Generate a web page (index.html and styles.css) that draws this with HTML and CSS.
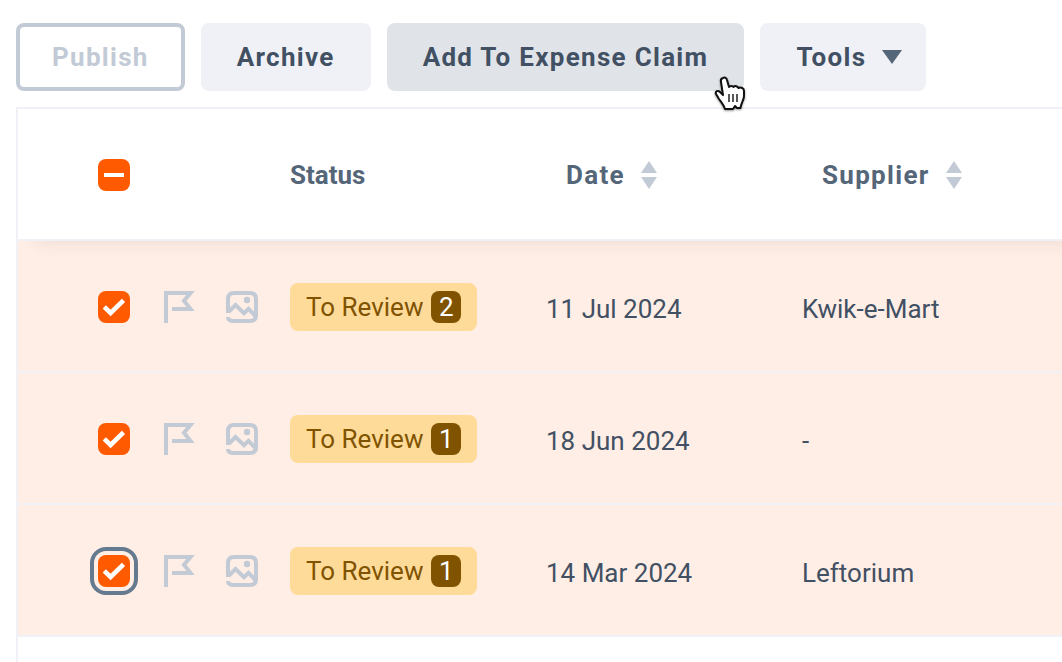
FILE: index.html
```html
<!DOCTYPE html>
<html lang="en">
<head>
<meta charset="utf-8">
<title>Costs inbox</title>
<link rel="stylesheet" href="styles.css">
</head>
<body>
<svg class="sprite" aria-hidden="true">
  <symbol id="flag" viewBox="0 0 32 32">
    <path d="M2 32V2H26.500L20 9.800L26.500 18H8" fill="none" stroke="currentColor" stroke-width="4"/>
  </symbol>
  <symbol id="image" viewBox="0 0 32 32">
    <path d="M2 22V8Q2 2 8 2H24Q30 2 30 8V24Q30 30 24 30H8Q2 30 2 26" fill="none" stroke="currentColor" stroke-width="4"/>
    <path d="M0 20H3.500L9.500 14L18 22.200L22.500 17.800L30 25.500" fill="none" stroke="currentColor" stroke-width="4"/>
    <circle cx="21" cy="9" r="3.200" fill="currentColor"/>
  </symbol>
  <symbol id="sort" viewBox="0 0 16 28">
    <path d="M8 0L16 12H0ZM0 16H16L8 28Z" fill="currentColor"/>
  </symbol>
</svg>
<main class="page">
  <div class="toolbar">
    <button class="btn btn-outline" type="button" disabled>Publish</button>
    <button class="btn" type="button">Archive</button>
    <button class="btn btn-active" type="button">Add To Expense Claim
      <svg class="pointer" viewBox="0 0 32 36" aria-hidden="true">
        <path d="M9 2C11 1 12.500 2 13 4L15 11C16 9.500 18.500 9.500 19.500 11C21 9.500 23.500 10 24.500 12C27 11 30 12 30 15V20C30 24 27 27 26.500 32H23L21 30L19 33H11C10 29 7 26 5 23L2 18C1 15 4 14 6 16L9 19L7 6C6.500 4 7 2.500 9 2Z" fill="#fff" stroke="#111" stroke-width="2" stroke-linejoin="round"/>
        <path d="M15 18V26M19 18V26M23 18V26" stroke="#222" stroke-width="1.500"/>
      </svg>
    </button>
    <button class="btn btn-menu" type="button">Tools
      <svg class="caret" viewBox="0 0 20 14" aria-hidden="true"><path d="M0 0H20L10 14Z" fill="currentColor"/></svg>
    </button>
  </div>
  <div class="table-frame">
    <table class="items">
      <colgroup><col class="col-check"><col class="col-flag"><col class="col-image"><col class="col-status"><col class="col-date"><col></colgroup>
      <thead>
        <tr>
          <th class="cell-check"><input class="check check-mixed" type="checkbox" aria-label="Select all"></th>
          <td></td>
          <td></td>
          <th scope="col">Status</th>
          <th scope="col"><button class="sort" type="button">Date <svg class="sort-icon" aria-hidden="true"><use href="#sort"/></svg></button></th>
          <th scope="col"><button class="sort" type="button">Supplier <svg class="sort-icon" aria-hidden="true"><use href="#sort"/></svg></button></th>
        </tr>
      </thead>
      <tbody>
        <tr>
          <td class="cell-check"><input class="check" type="checkbox" checked aria-label="Select Kwik-e-Mart"></td>
          <td><svg class="icon" aria-hidden="true"><use href="#flag"/></svg></td>
          <td><svg class="icon" aria-hidden="true"><use href="#image"/></svg></td>
          <td><span class="badge">To Review <span class="count">2</span></span></td>
          <td class="cell-text">11 Jul 2024</td>
          <td class="cell-text">Kwik-e-Mart</td>
        </tr>
        <tr>
          <td class="cell-check"><input class="check" type="checkbox" checked aria-label="Select item from 18 Jun 2024"></td>
          <td><svg class="icon" aria-hidden="true"><use href="#flag"/></svg></td>
          <td><svg class="icon" aria-hidden="true"><use href="#image"/></svg></td>
          <td><span class="badge">To Review <span class="count">1</span></span></td>
          <td class="cell-text">18 Jun 2024</td>
          <td class="cell-text">-</td>
        </tr>
        <tr>
          <td class="cell-check"><input class="check check-focused" type="checkbox" checked aria-label="Select Leftorium"></td>
          <td><svg class="icon" aria-hidden="true"><use href="#flag"/></svg></td>
          <td><svg class="icon" aria-hidden="true"><use href="#image"/></svg></td>
          <td><span class="badge">To Review <span class="count">1</span></span></td>
          <td class="cell-text">14 Mar 2024</td>
          <td class="cell-text">Leftorium</td>
        </tr>
      </tbody>
    </table>
  </div>
</main>
</body>
</html>
```
FILE: styles.css
```css
* { box-sizing: border-box; }

body {
  margin: 0;
  background: #fff;
  color: #425063;
  font: 26px/32px Roboto, "Liberation Sans", sans-serif;
}

.sprite { position: absolute; width: 0; height: 0; }

.page {
  display: flex;
  flex-direction: column;
  gap: 16px;
  min-height: 100vh;
  padding: 23px 0 0 16px;
  overflow: hidden;
}

.toolbar {
  position: relative;
  z-index: 2;
  display: flex;
  gap: 16px;
}

.btn {
  position: relative;
  display: flex;
  align-items: center;
  padding: 18px 36px;
  border: 0;
  border-radius: 8px;
  background: #f0f1f6;
  color: #425063;
  font: inherit;
  font-weight: 700;
  letter-spacing: 0.05em;
  white-space: nowrap;
}

.btn-outline {
  padding: 14px 32px;
  border: 4px solid #c2cad6;
  background: #fff;
  color: #c2cad6;
}

.btn-active { background: #e0e4e9; }
.btn-menu { gap: 16px; padding-right: 24px; }
.caret { width: 20px; height: 14px; color: #556679; }

.pointer {
  position: absolute;
  right: -2px;
  bottom: -21px;
  width: 32px;
  height: 36px;
  filter: drop-shadow(0 1px 1px rgb(0 0 0 / 40%));
}

.table-frame {
  flex: 1;
  border: solid #f0f1f6;
  border-width: 2px 0 0 2px;
  overflow: hidden;
}

.items {
  width: calc(100% + 48px);
  table-layout: fixed;
  border-spacing: 0;
}

.col-check { width: 130px; }
.col-flag { width: 62px; }
.col-image { width: 64px; }
.col-status, .col-date { width: 256px; }

.items th,
.items td {
  height: 132px;
  padding: 2px 16px 0;
  border-bottom: 2px solid #f0f1f6;
  text-align: left;
  vertical-align: middle;
}

.items .cell-check { padding-left: 80px; }
.items .cell-text { padding-top: 6px; }

thead tr {
  position: relative;
  z-index: 1;
  background: #fff;
  box-shadow: 0 20px 16px -18px rgb(70 70 0 / 9%);
  color: #556679;
}

tbody tr { background: #ffeee6; }

.check {
  display: block;
  width: 32px;
  height: 32px;
  margin: 0;
  border-radius: 8px;
  appearance: none;
  background: #ff5a00 url("data:image/svg+xml,%3Csvg xmlns='http://www.w3.org/2000/svg' viewBox='0 0 32 32'%3E%3Cpath d='M6.300 15.800L12.600 22L25.500 9.300' fill='none' stroke='white' stroke-width='4.600'/%3E%3C/svg%3E");
}

.check-mixed {
  background-image: linear-gradient(#fff, #fff);
  background-position: center;
  background-repeat: no-repeat;
  background-size: 20px 4px;
}

.check-focused { outline: 4px solid #65798f; outline-offset: 4px; }

.icon { display: block; width: 32px; height: 32px; color: #c2cad6; }

.badge {
  display: inline-flex;
  align-items: center;
  gap: 8px;
  height: 48px;
  padding: 0 16px;
  border-radius: 8px;
  background: #ffdb99;
  color: #805300;
  vertical-align: middle;
}

.count {
  width: 30px;
  border-radius: 8px;
  background: #805300;
  color: #fff;
  text-align: center;
}

.sort {
  display: flex;
  align-items: center;
  gap: 16px;
  padding: 0 20px;
  border: 0;
  background: none;
  color: inherit;
  font: inherit;
  letter-spacing: 0.05em;
}

.sort-icon { width: 16px; height: 28px; color: #c2cad6; }
```
